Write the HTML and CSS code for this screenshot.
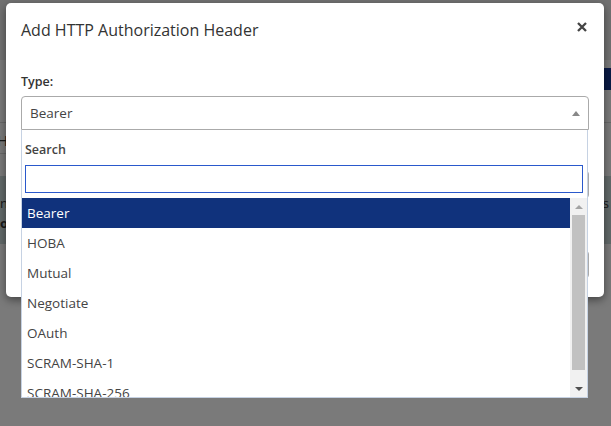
FILE: index.html
```html
<!DOCTYPE html>
<html>
<head>
<meta charset="utf-8">
<link rel="stylesheet" href="styles.css">
</head>
<body>
<div class="page">
  <div class="nav"></div>
  <div class="toolbar"><span class="tb-btn"></span></div>
  <div class="row-head">Headers</div>
  <div class="alert">
    <div class="al-line"><span>n</span><span>s</span></div>
    <div class="strong">o</div>
  </div>
</div>
<div class="backdrop"></div>
<div class="modal">
  <div class="modal-header">
    <h4 class="modal-title">Add HTTP Authorization Header</h4>
    <span class="close"><svg width="10" height="10" viewBox="0 0 10 10"><path d="M1 1L9 9M9 1L1 9" stroke="#444" stroke-width="2.3" stroke-linecap="butt"/></svg></span>
  </div>
  <div class="modal-body">
    <label class="lbl">Type:</label>
    <div class="select-wrap">
      <div class="select">
        <span>Bearer</span>
        <span class="arrow-up"></span>
      </div>
      <div class="dropdown">
        <div class="search">
          <div class="search-lbl">Search</div>
          <div class="search-input"></div>
        </div>
        <div class="list">
          <div class="options">
            <div class="opt sel">Bearer</div>
            <div class="opt">HOBA</div>
            <div class="opt">Mutual</div>
            <div class="opt">Negotiate</div>
            <div class="opt">OAuth</div>
            <div class="opt">SCRAM-SHA-1</div>
            <div class="opt">SCRAM-SHA-256</div>
            <div class="opt">vapid</div>
          </div>
          <div class="scrollbar">
            <div class="sb-btn"><span class="tri-up"></span></div>
            <div class="sb-track"><div class="sb-thumb"></div></div>
            <div class="sb-btn"><span class="tri-down"></span></div>
          </div>
        </div>
      </div>
    </div>
    <div class="field"></div>
    <div class="spacer"></div>
    <div class="field"></div>
  </div>
</div>
</body>
</html>
```
FILE: styles.css
```css
* { box-sizing: border-box; }
html, body { margin: 0; padding: 0; }
body {
  width: 611px;
  height: 426px;
  overflow: hidden;
  background: #f4f4f4;
  font-family: "Open Sans", "Noto Sans", sans-serif;
  color: #333;
  position: relative;
}
.page { width: 611px; }
.nav { height: 60px; background: #e2e2e2; }
.toolbar {
  height: 63px;
  display: flex;
  justify-content: flex-end;
  align-items: flex-start;
  padding-top: 8px;
  border-bottom: 1px solid #d0d0d0;
  background: #f4f4f4;
}
.tb-btn {
  height: 22px;
  width: 7px;
  background: #14348a;
}
.row-head {
  height: 31px;
  font-size: 15px;
  line-height: 34px;
  margin-left: -3px;
  border-bottom: 1px solid #d0d0d0;
  overflow: hidden;
  width: 10px;
}
.alert {
  margin-top: 22px;
  height: 68px;
  background: #c4d2d2;
  font-size: 13px;
  padding: 17px 0 0 0;
  line-height: 20px;
}
.al-line { display: flex; justify-content: space-between; padding-right: 2px; }
.alert .strong { font-weight: 700; }
.backdrop {
  position: absolute;
  inset: 0;
  background: rgba(0, 0, 0, 0.5);
}
.modal {
  position: absolute;
  left: 6px;
  top: 3px;
  width: 598px;
  background: #fff;
  border-radius: 5px;
  box-shadow: 0 3px 9px rgba(0, 0, 0, 0.45);
}
.modal-header {
  display: flex;
  justify-content: space-between;
  align-items: center;
  padding: 15px 17px 15px 15px;
}
.modal-title {
  margin: 0;
  font-size: 16px;
  line-height: 24px;
  font-weight: 400;
  color: #333;
}
.close { display: flex; margin-top: -6px; }
.modal-body { padding: 16px 15px 19px 15px; }
.lbl {
  display: block;
  font-size: 12.5px;
  line-height: 18px;
  font-weight: 600;
  color: #333;
  margin-bottom: 5px;
}
.select-wrap { position: relative; }
.select {
  height: 34px;
  border: 1px solid #aaa;
  border-radius: 4px 4px 0 0;
  display: flex;
  align-items: center;
  justify-content: space-between;
  padding: 0 8px 0 8px;
  font-size: 13.5px;
  color: #444;
}
.arrow-up {
  width: 0;
  height: 0;
  border-left: 4px solid transparent;
  border-right: 4px solid transparent;
  border-bottom: 5px solid #888;
}
.field {
  margin-top: 41px;
  height: 27px;
  border: 1px solid #aaa;
  border-radius: 3px;
}
.spacer { height: 53px; }
.spacer + .field { margin-top: 0; }
.dropdown {
  position: absolute;
  top: 100%;
  left: 0;
  right: 1px;
  background: #fff;
  border: 1px solid #c6d2e3;
  border-top: none;
  z-index: 5;
}
.search { padding: 11px 4px 5px 3px; }
.search-lbl {
  font-size: 12.5px;
  font-weight: 600;
  line-height: 18px;
  color: #444;
  margin-bottom: 6px;
}
.search-input {
  height: 28px;
  border: 1px solid #2a59cc;
  background: #fff;
}
.list { display: flex; height: 199px; }
.options { flex: 1; overflow: hidden; }
.opt {
  height: 30px;
  line-height: 30px;
  padding-left: 5px;
  font-size: 13.5px;
  color: #444;
  white-space: nowrap;
}
.opt.sel { background: #10327c; color: #fff; }
.scrollbar {
  width: 17px;
  background: #f1f1f1;
  display: flex;
  flex-direction: column;
}
.sb-btn {
  height: 17px;
  display: flex;
  align-items: center;
  justify-content: center;
}
.sb-track { flex: 1; padding: 0 2px; }
.sb-thumb { height: 155px; background: #c1c1c1; }
.tri-up {
  width: 0; height: 0;
  border-left: 4px solid transparent;
  border-right: 4px solid transparent;
  border-bottom: 4px solid #a3a3a3;
}
.tri-down {
  width: 0; height: 0;
  border-left: 4px solid transparent;
  border-right: 4px solid transparent;
  border-top: 4px solid #505050;
}
```
